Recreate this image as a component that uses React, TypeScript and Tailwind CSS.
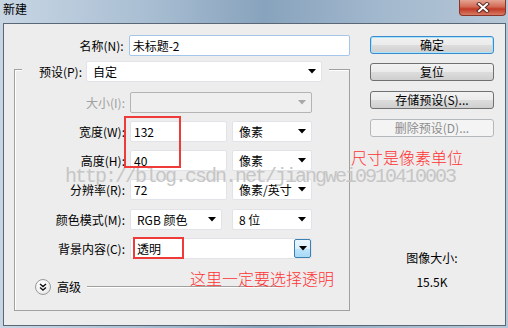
import React from "react";
import clsx from "clsx";

// маленькая стрелка комбобокса
function Arrow({ gray }: { gray?: boolean }) {
  return (
    <svg width="8" height="5" viewBox="0 0 8 5">
      <path d="M0 0h8L4 4.5z" fill={gray ? "#a8a8a8" : "#000"} />
    </svg>
  );
}

function Select({
  className,
  value,
  disabled,
  button,
}: {
  className: string;
  value?: string;
  disabled?: boolean;
  button?: boolean;
}) {
  return (
    <div
      className={clsx(
        "flex h-[21px] items-center rounded-[2px] border",
        disabled ? "border-[#b4b4b4] bg-[#efefef]" : "border-[#e1e3e8] bg-white",
        className
      )}
    >
      <span className="flex-1 pl-[6px] text-[12px] leading-none">{value}</span>
      {button ? (
        <div className="flex h-full w-[17px] items-center justify-center rounded-[2px] border border-[#3c7fb1] bg-[linear-gradient(#eaf6fd_0%,#d9f0fc_50%,#bee6fd_50%,#a7d9f5_100%)]">
          <Arrow />
        </div>
      ) : (
        <div className="pr-[5px]">
          <Arrow gray={disabled} />
        </div>
      )}
    </div>
  );
}

function Input({ className, value }: { className: string; value: string }) {
  return (
    <div
      className={clsx(
        "flex h-[21px] items-center rounded-[2px] border bg-white pl-[3px] text-[12px] leading-none",
        className
      )}
    >
      {value}
    </div>
  );
}

function Label({ children, gray }: { children: React.ReactNode; gray?: boolean }) {
  return (
    <div
      className={clsx(
        "mr-[5px] w-[110px] text-right text-[12px] leading-none",
        gray ? "text-[#a0a0a0]" : "text-black"
      )}
    >
      {children}
    </div>
  );
}

function Btn({
  children,
  primary,
  disabled,
  className,
}: {
  children: React.ReactNode;
  primary?: boolean;
  disabled?: boolean;
  className?: string;
}) {
  return (
    <div
      className={clsx(
        "flex h-[18px] w-[124px] items-center justify-center rounded-[3px] border text-[12px] leading-none",
        disabled
          ? "border-[#b5b8ba] bg-[#f4f4f4] text-[#8d8d8d]"
          : "bg-[linear-gradient(#f2f2f2_0%,#ebebeb_50%,#dddddd_50%,#cfcfcf_100%)] text-black",
        !disabled && (primary ? "border-[#3c8ccb] shadow-[inset_0_0_0_1px_#a8e4fb]" : "border-[#707070]"),
        className
      )}
    >
      {children}
    </div>
  );
}

export default function App() {
  return (
    <div className="relative h-[328px] w-[508px] overflow-hidden bg-[linear-gradient(90deg,#c8d6e4_0%,#aabfd3_28%,#88a3bd_52%,#a3b9ce_76%,#b6c7d7_100%)] font-['Noto_Sans_CJK_SC',sans-serif]">
      {/* заголовок окна */}
      <div className="flex h-[23px] items-start">
        <div className="pl-[3px] pt-[3px] text-[12px] leading-none text-black">新建</div>
        <div className="flex-1" />
        <div className="mr-[2px] flex h-[16px] w-[47px] items-center justify-center rounded-b-[4px] border border-t-0 border-[#8a342a] bg-[linear-gradient(#e5a493_0%,#d26a55_45%,#c23a26_60%,#d67b66_100%)]">
          <svg width="14" height="11" viewBox="0 0 14 11">
            <path d="M3 2l8 7M11 2l-8 7" stroke="#5a2a24" strokeWidth="4" strokeLinecap="square" />
            <path d="M3 2l8 7M11 2l-8 7" stroke="#fff" strokeWidth="2" strokeLinecap="square" />
          </svg>
        </div>
      </div>

      {/* клиентская область */}
      <div className="ml-[3px] flex h-[303px] w-[503px] border border-[#5a6776] bg-[#ededed]">
        <div className="w-[346px] pl-[10px] pt-[11px]">
          <div className="flex items-center">
            <div className="mr-[5px] w-[111px] text-right text-[12px] leading-none">名称(N):</div>
            <Input className="w-[224px] border-[#a3c6ea]" value="未标题-2" />
          </div>

          {/* группа */}
          <div className="mt-[13px] h-[242px] w-[336px] border border-[#a0a0a0] shadow-[inset_1px_1px_0_#fff]">
            <div className="-mt-[9px] ml-[7px] flex w-[307px] items-center bg-[#ededed]">
              <div className="mr-[4px] w-[60px] text-right text-[12px] leading-none">预设(P):</div>
              <Select className="w-[236px]" value="自定" />
            </div>

            <div className="mt-[10px] flex items-center">
              <Label gray>大小(I):</Label>
              <Select className="h-[20px] w-[182px]" disabled />
            </div>

            <div className="mt-[8px] flex items-center">
              <Label>宽度(W):</Label>
              <Input className="w-[97px] border-[#e1e3e8]" value="132" />
              <Select className="ml-[5px] w-[80px]" value="像素" />
            </div>

            <div className="mt-[8px] flex items-center">
              <Label>高度(H):</Label>
              <Input className="w-[97px] border-[#e1e3e8]" value="40" />
              <Select className="ml-[5px] w-[80px]" value="像素" />
            </div>

            <div className="mt-[8px] flex items-center">
              <Label>分辨率(R):</Label>
              <Input className="w-[97px] border-[#e1e3e8]" value="72" />
              <Select className="ml-[5px] w-[80px]" value="像素/英寸" />
            </div>

            <div className="mt-[9px] flex items-center">
              <Label>颜色模式(M):</Label>
              <Select className="w-[92px]" value="RGB 颜色" />
              <Select className="ml-[10px] w-[80px]" value="8 位" />
            </div>

            <div className="mt-[8px] flex items-center">
              <Label>背景内容(C):</Label>
              <Select className="w-[182px] border-[#b9cde0]" value="透明" button />
            </div>

            <div className="ml-[20px] mt-[20px] flex items-center">
              <div className="flex h-[16px] w-[16px] items-center justify-center rounded-full border border-[#9a9a9a] bg-[radial-gradient(circle_at_40%_35%,#ffffff_0%,#f4f4f4_50%,#d6d6d6_100%)]">
                <svg width="8" height="8" viewBox="0 0 8 8">
                  <path d="M1 1l3 2.5L7 1M1 4.5l3 2.5 3-2.5" stroke="#111" strokeWidth="1.4" fill="none" />
                </svg>
              </div>
              <div className="ml-[6px] text-[12px] leading-none">高级</div>
              <div className="ml-[6px] h-[2px] w-[191px] border-b border-t border-b-white border-t-[#a0a0a0]" />
            </div>
          </div>
        </div>

        {/* кнопки справа */}
        <div className="ml-[20px] flex w-[124px] flex-col items-center pt-[12px]">
          <Btn primary>确定</Btn>
          <Btn className="mt-[9px]">复位</Btn>
          <Btn className="mt-[10px]">存储预设(S)...</Btn>
          <Btn className="mt-[10px]" disabled>删除预设(D)...</Btn>
          <div className="mt-[113px] text-[12px] leading-[16px]">图像大小:</div>
          <div className="mt-[8px] text-[12px] leading-[16px]">15.5K</div>
        </div>
      </div>

      {/* водяной знак и пометки */}
      <div className="pointer-events-none absolute left-[65px] top-[167px] font-['Liberation_Mono',monospace] text-[20px] leading-none tracking-[-2px] text-[#c6c6c6]">
        http://blog.csdn.net/jiangwei0910410003
      </div>
      <div className="absolute left-[124px] top-[116px] h-[52px] w-[57px] border-2 border-[#ef3a3a]" />
      <div className="absolute left-[133px] top-[237px] h-[22px] w-[51px] border-2 border-[#ef3a3a]" />
      <div className="absolute left-[351px] top-[149px] text-[16px] font-light leading-none text-[#ff3333]">尺寸是像素单位</div>
      <div className="absolute left-[190px] top-[270px] text-[16px] font-light leading-none text-[#ff3333]">这里一定要选择透明</div>
    </div>
  );
}
